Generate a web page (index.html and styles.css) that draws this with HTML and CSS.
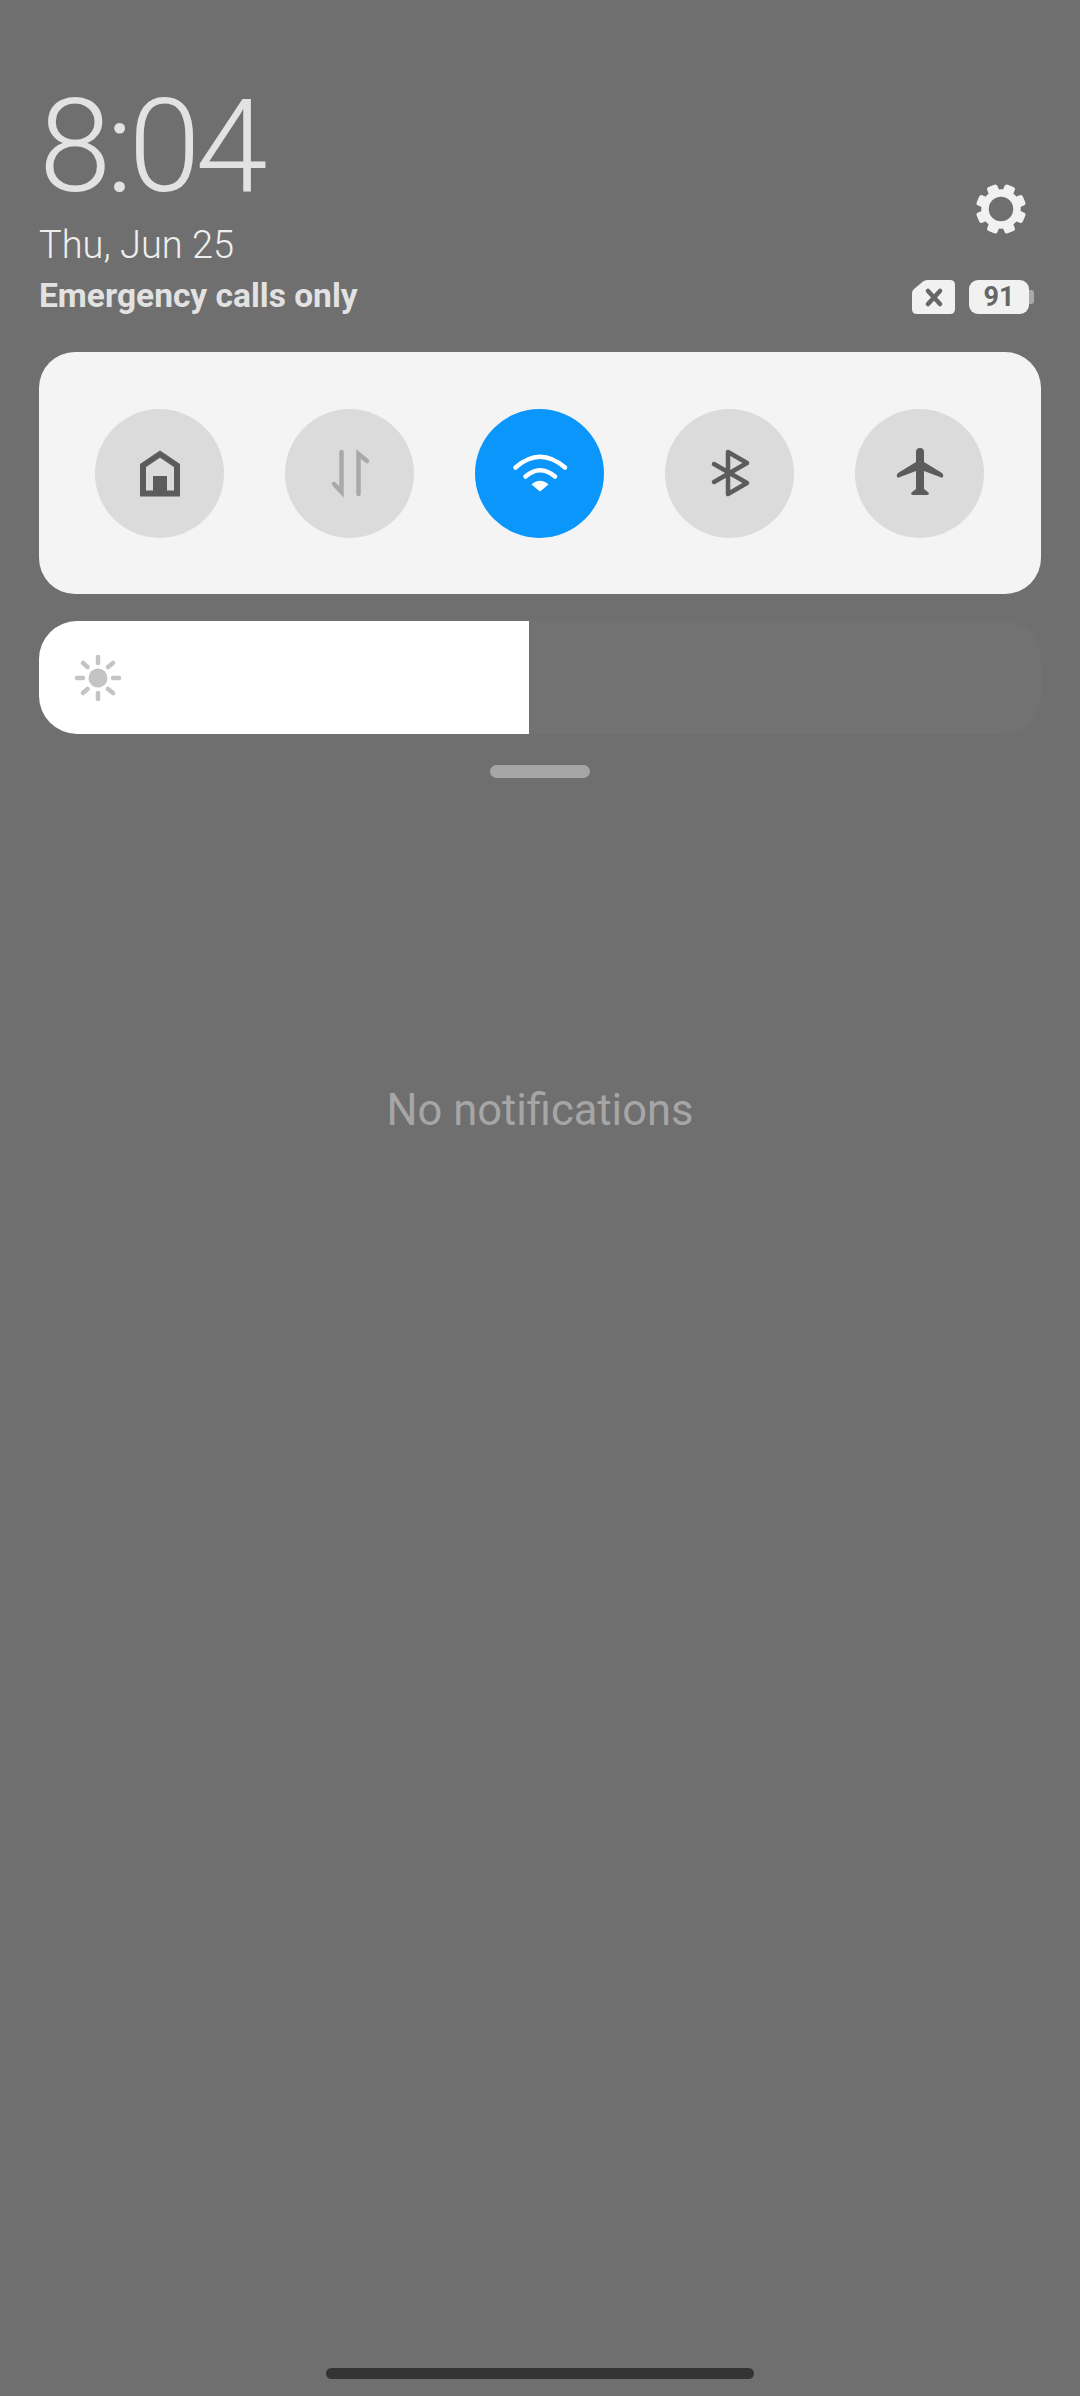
FILE: index.html
```html
<!DOCTYPE html>
<html>
<head>
	<meta charset="utf-8"/>
	<title>Notification shade</title>
	<link rel="stylesheet" href="styles.css">
</head>
<body>
	<div class="header">
		<div class="clock">
			<div class="time">8:04</div>
			<div class="date">Thu, Jun 25</div>
			<div class="carrier">Emergency calls only</div>
		</div>
		<div class="side">
			<svg class="gear" viewBox="0 0 52 52">
				<circle cx="26" cy="26" r="16" fill="none" stroke="#f1f1f1" stroke-width="7.500"/>
				<g fill="#f1f1f1">
					<rect x="20.500" y="1" width="11" height="10" rx="2.500" transform="rotate(22.500 26 26)"/>
					<rect x="20.500" y="1" width="11" height="10" rx="2.500" transform="rotate(67.500 26 26)"/>
					<rect x="20.500" y="1" width="11" height="10" rx="2.500" transform="rotate(112.500 26 26)"/>
					<rect x="20.500" y="1" width="11" height="10" rx="2.500" transform="rotate(157.500 26 26)"/>
					<rect x="20.500" y="1" width="11" height="10" rx="2.500" transform="rotate(202.500 26 26)"/>
					<rect x="20.500" y="1" width="11" height="10" rx="2.500" transform="rotate(247.500 26 26)"/>
					<rect x="20.500" y="1" width="11" height="10" rx="2.500" transform="rotate(292.500 26 26)"/>
					<rect x="20.500" y="1" width="11" height="10" rx="2.500" transform="rotate(337.500 26 26)"/>
				</g>
			</svg>
			<div class="status">
				<svg class="sim" viewBox="0 0 43 34">
					<path d="M15 0H38Q43 0 43 5V29Q43 34 38 34H5Q0 34 0 29V13Q0 11 2 9L11 1.500Q13 0 15 0Z" fill="#f1f1f1"/>
					<path d="M16 11L28 24M28 11L16 24" fill="none" stroke="#666" stroke-width="4.500" stroke-linecap="round"/>
				</svg>
				<div class="battery">
					<span class="level">91</span>
					<span class="nub"></span>
				</div>
			</div>
		</div>
	</div>

	<div class="panel">
		<div class="toggle">
			<svg viewBox="0 0 60 60">
				<path d="M13 50.500V22.500L30 11L47 22.500V50.500Z" fill="none" stroke="#5c5c5c" stroke-width="6"/>
				<rect x="23" y="33" width="14" height="18" fill="#5c5c5c"/>
			</svg>
		</div>
		<div class="toggle">
			<svg viewBox="0 0 60 60">
				<path d="M21.500 9V49L14 41M38.500 51V11L47 18" fill="none" stroke="#a9a9a9" stroke-width="4.500" stroke-linecap="round"/>
			</svg>
		</div>
		<div class="toggle on">
			<svg viewBox="0 0 60 60">
				<path d="M5.500 24.500Q30 3 55 24.500" fill="none" stroke="#fff" stroke-width="4.500" stroke-linecap="round"/>
				<path d="M15.500 33.500Q30 21 45 33.500" fill="none" stroke="#fff" stroke-width="4.500" stroke-linecap="round"/>
				<path d="M21.500 41.500Q30 34 38.500 41.500L30 48.500Z" fill="#fff"/>
			</svg>
		</div>
		<div class="toggle">
			<svg viewBox="0 0 60 60">
				<path d="M14 21L47 40L28 51V9L47 20L14 39" fill="none" stroke="#5c5c5c" stroke-width="4.500" stroke-linecap="round" stroke-linejoin="round"/>
			</svg>
		</div>
		<div class="toggle">
			<svg viewBox="0 0 60 60">
				<path d="M26 9Q26 5 30 5Q34 5 34 9V19L52 30Q54 32 53 34Q52 35 50 34L34 28V46L39 50Q39 52 37 52H23Q21 52 21 50L26 46V28L10 34Q8 35 7 34Q6 32 8 30L26 19Z" fill="#5c5c5c"/>
			</svg>
		</div>
	</div>

	<div class="slider">
		<div class="fill" style="width:48.900%">
			<svg class="sun" viewBox="0 0 50 50">
				<circle cx="25" cy="25" r="9.500" fill="#c4c4c4"/>
				<path d="M25 4V10M25 40V46M4 25H10M40 25H46M10 10L14.500 14M40 10L35 14M10 40L14.500 36M40 40L35 36" fill="none" stroke="#c4c4c4" stroke-width="4.500" stroke-linecap="round"/>
			</svg>
		</div>
	</div>

	<div class="handle"></div>

	<div class="empty">No notifications</div>

	<div class="homebar"></div>
</body>
</html>
```

FILE: styles.css
```css
html, body { height:100%; overflow:hidden; }
body { margin:0; padding:0 39px; box-sizing:border-box; background:#6f6f6f; font-family:Roboto, "Liberation Sans", sans-serif; display:flex; flex-direction:column; }

.header{display:flex;justify-content:space-between;align-items:flex-end;padding-top:82px;}
.time{font-size:130px;line-height:130px;font-weight:300;letter-spacing:-5px;color:#e2e2e2;}
.date{font-size:38px;line-height:44px;margin-top:11px;color:#efefef;font-weight:300;}
.carrier{font-size:33.500px;line-height:40px;margin-top:9px;color:#e2e2e2;font-weight:700;}

.side{display:flex;flex-direction:column;align-items:flex-end;padding-bottom:2px;}
.gear{width:52px;height:52px;margin:0 14px 45px 0;display:block;}
.status{display:flex;align-items:center;gap:14px;padding-right:7px;}
.sim{width:43px;height:34px;display:block;}
.battery{display:flex;align-items:center;}
.level{width:60px;height:34px;border-radius:9px;background:#f1f1f1;color:#666;font-size:27px;line-height:34px;font-weight:700;text-align:center;}
.nub{width:5px;height:14px;border-radius:0 3px 3px 0;background:#a9a9a9;}

.panel{margin-top:36px;height:242px;background:#f4f4f4;border-radius:36px;padding:0 57px 0 56px;display:flex;justify-content:space-between;align-items:center;}
.toggle{width:129px;height:129px;border-radius:50%;background:#dbdbdb;display:flex;align-items:center;justify-content:center;}
.toggle.on{background:#0a96fb;}
.toggle svg{width:60px;height:60px;display:block;}

.slider{margin-top:27px;height:113px;border-radius:38px;background:#727272;overflow:hidden;}
.fill{height:100%;background:#fff;display:flex;align-items:center;padding-left:34px;box-sizing:border-box;}
.sun{width:50px;height:50px;display:block;}

.handle{width:100px;height:13px;margin:31px auto 0;border-radius:7px;background:#a6a6a6;}

.empty{margin-top:308px;text-align:center;font-size:43.500px;line-height:50px;color:#a6a6a6;}

.homebar{width:428px;height:11px;margin:auto auto 17px;border-radius:6px;background:#343434;}
```
